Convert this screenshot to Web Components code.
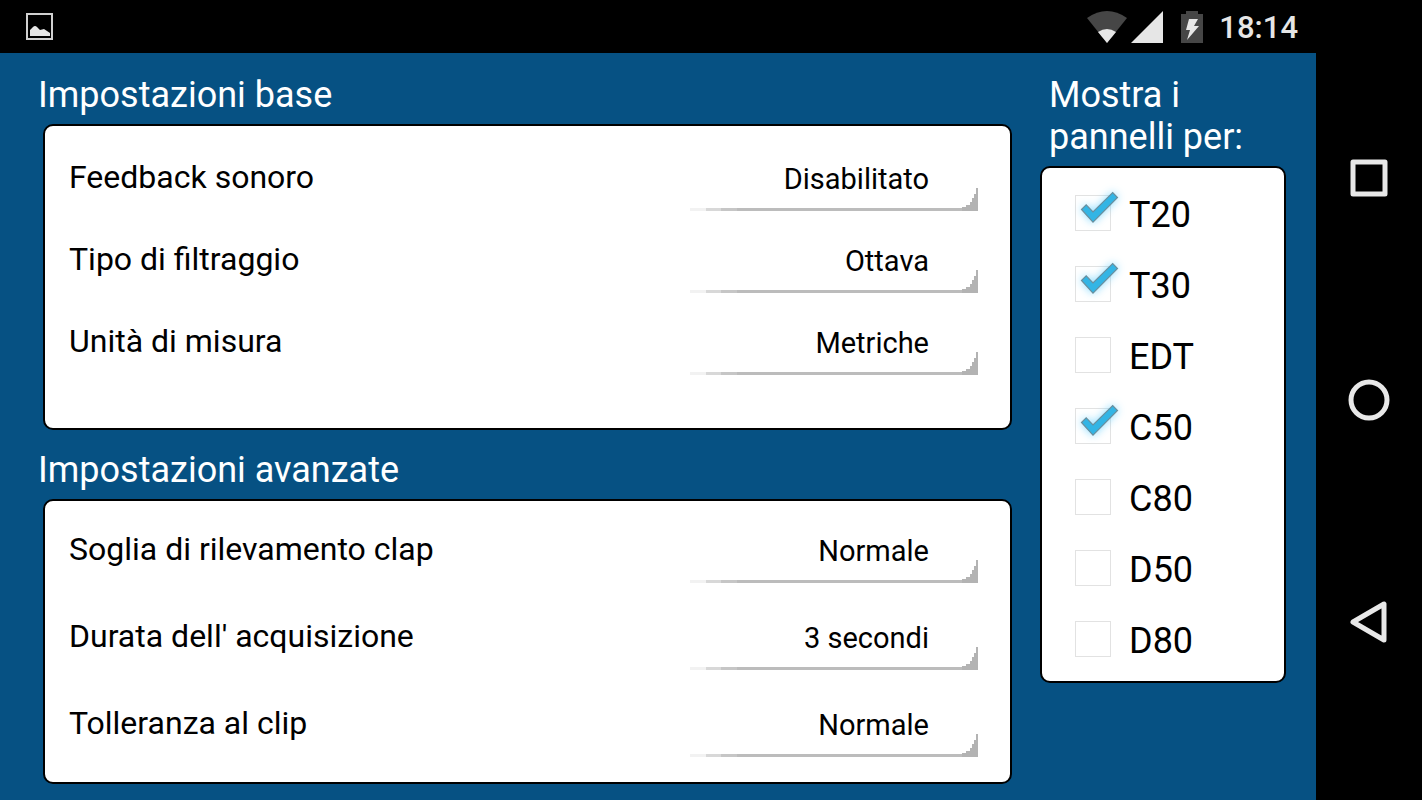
<!DOCTYPE html>
<html lang="it">
<head>
<meta charset="utf-8">
<meta name="viewport" content="width=device-width, initial-scale=1">
<title>Impostazioni</title>
<style>
    html, body { height: 100%; }
    body {
        margin: 0;
        background: #000;
        color: #000;
        font-family: Roboto, "Noto Sans", sans-serif;
    }
</style>
</head>
<body>

<device-screen>
    <status-bar slot="status" time="18:14"></status-bar>

    <settings-group heading="Impostazioni base" class="base">
        <setting-row label="Feedback sonoro" value="Disabilitato"></setting-row>
        <setting-row label="Tipo di filtraggio" value="Ottava"></setting-row>
        <setting-row label="Unità di misura" value="Metriche"></setting-row>
    </settings-group>

    <settings-group heading="Impostazioni avanzate" class="advanced">
        <setting-row label="Soglia di rilevamento clap" value="Normale"></setting-row>
        <setting-row label="Durata dell' acquisizione" value="3 secondi"></setting-row>
        <setting-row label="Tolleranza al clip" value="Normale"></setting-row>
    </settings-group>

    <settings-group slot="side" heading="Mostra i pannelli per:" class="panels">
        <check-row label="T20" checked></check-row>
        <check-row label="T30" checked></check-row>
        <check-row label="EDT"></check-row>
        <check-row label="C50" checked></check-row>
        <check-row label="C80"></check-row>
        <check-row label="D50"></check-row>
        <check-row label="D80"></check-row>
    </settings-group>

    <nav-bar slot="nav"></nav-bar>
</device-screen>

<script>
//SCREEN LAYOUT

class DeviceScreen extends HTMLElement {
    constructor() {
        super();
        this.attachShadow({ mode: "open" });
        this.shadowRoot.innerHTML = `
        <style>
            :host {
                display: grid;
                grid-template-columns: 1fr 106px;
                min-height: 100vh;
            }
            .screen {
                display: flex;
                flex-direction: column;
            }
            main {
                flex: 1;
                display: grid;
                grid-template-columns: 1fr 246px;
                gap: 28px;
                align-items: start;
                box-sizing: border-box;
                padding: 21px 30px 16px 43px;
                background: #065183;
            }
            .groups {
                display: flex;
                flex-direction: column;
                gap: 19px;
            }
            ::slotted(.base) {
                --row-height: 82px;
                --card-padding: 11px 32px 45px 24px;
                --heading-indent: -5px;
            }
            ::slotted(.advanced) {
                --row-height: 87px;
                --card-padding: 5px 32px 15px 24px;
                --heading-indent: -5px;
            }
            ::slotted(.panels) {
                --row-height: 71px;
                --card-padding: 11px 32px 5px 33px;
                --heading-indent: 9px;
            }
        </style>

        <div class="screen">
            <slot name="status"></slot>
            <main>
                <div class="groups"><slot></slot></div>
                <slot name="side"></slot>
            </main>
        </div>
        <slot name="nav"></slot>
        `;
    }
}
customElements.define("device-screen", DeviceScreen);

//STATUS BAR

class StatusBar extends HTMLElement {
    constructor() {
        super();
        this.attachShadow({ mode: "open" });
    }

    connectedCallback() {
        this.shadowRoot.innerHTML = `
        <style>
            :host {
                display: flex;
                justify-content: space-between;
                align-items: center;
                box-sizing: border-box;
                height: 53px;
                padding: 0 18px 0 26px;
                background: #000;
                color: #e6e6e6;
            }
            svg { display: block; }
            .right {
                display: flex;
                align-items: center;
            }
            .signal { margin-left: 4px; }
            .battery { margin-left: 18px; }
            time {
                margin-left: 16px;
                padding-top: 2px;
                font-size: 31px;
                font-weight: 500;
                line-height: 38px;
            }
        </style>

        <svg width="27" height="27" viewBox="0 0 27 27">
            <rect x="1" y="1" width="25" height="25" fill="none" stroke="#d0d0d0" stroke-width="2"/>
            <path d="M4 23V17L7 14Q9 12 11 14L14 17L18 16L24 20V23Z" fill="#e6e6e6"/>
        </svg>

        <div class="right">
            <svg width="40" height="32" viewBox="0 0 40 32">
                <path d="M0 7Q20 -7 40 7L20 32Z" fill="#464646"/>
                <path d="M11 21Q20 15 29 21L20 32Z" fill="#e6e6e6"/>
            </svg>
            <svg class="signal" width="32" height="32" viewBox="0 0 32 32">
                <path d="M0 32L32 0V32Z" fill="#e6e6e6"/>
            </svg>
            <svg class="battery" width="22" height="32" viewBox="0 0 22 32">
                <path d="M0 3H5V0H17V3H22V32H0Z" fill="#464646"/>
                <path d="M8 8H17L13 15H18L6 29L9 19H5Z" fill="#e6e6e6"/>
            </svg>
            <time>${this.getAttribute("time")}</time>
        </div>
        `;
    }
}
customElements.define("status-bar", StatusBar);

//HEADING WITH A WHITE CARD BELOW

class SettingsGroup extends HTMLElement {
    constructor() {
        super();
        this.attachShadow({ mode: "open" });
    }

    connectedCallback() {
        this.shadowRoot.innerHTML = `
        <style>
            :host { display: block; }
            h2 {
                margin: 0 0 8px var(--heading-indent);
                color: #fff;
                font-size: 36px;
                font-weight: 400;
                line-height: 42px;
            }
            .card {
                padding: var(--card-padding);
                border: 2px solid #000;
                border-radius: 10px;
                background: #fff;
            }
        </style>

        <h2>${this.getAttribute("heading")}</h2>
        <div class="card"><slot></slot></div>
        `;
    }
}
customElements.define("settings-group", SettingsGroup);

//LABEL AND DROP-DOWN

class SettingRow extends HTMLElement {
    constructor() {
        super();
        this.attachShadow({ mode: "open" });
    }

    connectedCallback() {
        this.shadowRoot.innerHTML = `
        <style>
            :host {
                display: flex;
                justify-content: space-between;
                align-items: center;
                height: var(--row-height);
            }
            label {
                padding-bottom: 2px;
                font-size: 32px;
                line-height: 38px;
            }
            .spinner {
                position: relative;
                width: 288px;
            }
            select {
                appearance: none;
                display: block;
                width: 100%;
                height: 66px;
                margin: 0;
                padding: 2px 49px 0 0;
                border: 0;
                border-radius: 0;
                background: linear-gradient(90deg, #f2f2f2 16px, #d8d8d8 16px 31px, #c6c6c6 31px 47px, #bcbcbc 47px) bottom / 100% 3px no-repeat;
                color: #000;
                font: 400 29px/38px Roboto, "Noto Sans", sans-serif;
                text-align-last: right;
            }
            svg {
                position: absolute;
                right: 0;
                bottom: 0;
                pointer-events: none;
            }
        </style>

        <label for="value">${this.getAttribute("label")}</label>
        <div class="spinner">
            <select id="value">
                <option>${this.getAttribute("value")}</option>
            </select>
            <svg width="18" height="23" viewBox="0 0 18 23">
                <path d="M18 0V23H2V19H6V17H10V14H12V10H14V6H16V0Z" fill="#b3b3b3"/>
            </svg>
        </div>
        `;
    }
}
customElements.define("setting-row", SettingRow);

//TICK BOX

class CheckRow extends HTMLElement {
    constructor() {
        super();
        this.attachShadow({ mode: "open" });
    }

    connectedCallback() {
        const checked = this.hasAttribute("checked") ? "checked" : "";

        this.shadowRoot.innerHTML = `
        <style>
            :host {
                display: flex;
                align-items: center;
                height: var(--row-height);
            }
            label {
                display: flex;
                align-items: center;
                gap: 18px;
                font-size: 36px;
                line-height: 42px;
            }
            .box {
                position: relative;
                width: 36px;
                height: 36px;
                margin-bottom: 4px;
            }
            input {
                appearance: none;
                box-sizing: border-box;
                display: block;
                width: 36px;
                height: 36px;
                margin: 0;
                border: 1px solid #e2e2e2;
                background: #fff;
            }
            /* the tick hangs over the top right corner of its box */
            svg {
                position: absolute;
                left: 0;
                top: -8px;
                display: none;
                overflow: visible;
                pointer-events: none;
                filter: drop-shadow(0 0 4px rgba(90, 205, 255, 0.7));
            }
            input:checked + svg { display: block; }
        </style>

        <label>
            <span class="box">
                <input type="checkbox" ${checked}>
                <svg width="44" height="44" viewBox="0 0 44 44">
                    <path d="M6.5 22.5L11.2 17.8L18 25L37.7 5.5L42.5 10.5L18 35.2Z" fill="#33b5e5" stroke="#6a8f9e" stroke-width="1.2"/>
                </svg>
            </span>
            ${this.getAttribute("label")}
        </label>
        `;
    }
}
customElements.define("check-row", CheckRow);

//NAVIGATION BUTTONS

class NavBar extends HTMLElement {
    constructor() {
        super();
        this.attachShadow({ mode: "open" });
        this.shadowRoot.innerHTML = `
        <style>
            :host {
                display: flex;
                flex-direction: column;
                justify-content: center;
                background: #000;
            }
            button {
                display: flex;
                align-items: center;
                justify-content: center;
                height: 222px;
                padding: 0;
                border: 0;
                background: none;
            }
            svg {
                fill: none;
                stroke: #e8e8e8;
                stroke-width: 5;
                stroke-linejoin: round;
            }
        </style>

        <button aria-label="Recenti">
            <svg width="48" height="48" viewBox="0 0 48 48"><rect x="8" y="8" width="32" height="32"/></svg>
        </button>
        <button aria-label="Home">
            <svg width="48" height="48" viewBox="0 0 48 48"><circle cx="24" cy="24" r="18"/></svg>
        </button>
        <button aria-label="Indietro">
            <svg width="48" height="48" viewBox="0 0 48 48"><path d="M8 24L39 6V42Z"/></svg>
        </button>
        `;
    }
}
customElements.define("nav-bar", NavBar);
</script>
</body>
</html>
